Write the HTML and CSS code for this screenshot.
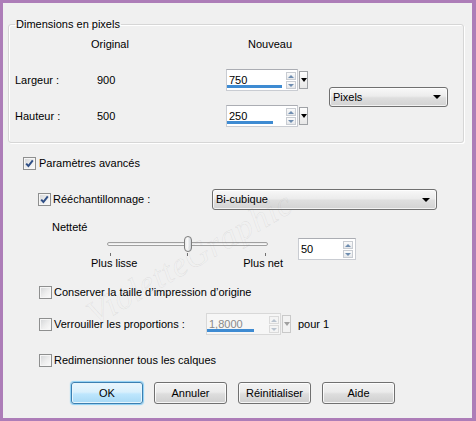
FILE: index.html
```html
<!DOCTYPE html>
<html lang="fr">
<head>
<meta charset="utf-8">
<title>Redimensionner</title>
<link rel="stylesheet" href="styles.css">
</head>
<body>
<div class="window">
  <div class="content">
    <fieldset class="group">
      <legend>Dimensions en pixels</legend>
      <div class="dim-grid">
        <span class="hdr-orig">Original</span>
        <span class="hdr-new">Nouveau</span>

        <span class="lbl r2">Largeur :</span>
        <span class="num r2">900</span>
        <div class="spin r2">
          <div class="field">
            <span class="val">750</span>
            <span class="updown"><span class="up"></span><span class="down"></span></span>
            <span class="bar" style="width:55px"></span>
          </div>
          <span class="drop"></span>
        </div>
        <div class="select pixels"><span>Pixels</span><span class="tri"></span></div>

        <span class="lbl r3">Hauteur :</span>
        <span class="num r3">500</span>
        <div class="spin r3">
          <div class="field">
            <span class="val">250</span>
            <span class="updown"><span class="up"></span><span class="down"></span></span>
            <span class="bar" style="width:46px"></span>
          </div>
          <span class="drop"></span>
        </div>
      </div>
    </fieldset>

    <div class="row row-adv">
      <span class="cb checked"><svg viewBox="0 0 11 11" width="11" height="11"><path d="M2.2 5.6 L4.4 8 L8.8 2.4" fill="none" stroke="#2f4f86" stroke-width="2"/></svg></span>
      <span class="txt">Paramètres avancés</span>
    </div>

    <div class="row row-resample">
      <div class="cblabel w-resample">
        <span class="cb checked"><svg viewBox="0 0 11 11" width="11" height="11"><path d="M2.2 5.6 L4.4 8 L8.8 2.4" fill="none" stroke="#2f4f86" stroke-width="2"/></svg></span>
        <span class="txt">Rééchantillonnage :</span>
      </div>
      <div class="select bicubic"><span>Bi-cubique</span><span class="tri"></span></div>
    </div>

    <div class="row row-net">Netteté</div>

    <div class="row row-slider">
      <div class="slider-col">
        <div class="slider">
          <span class="track"></span>
          <span class="tick t1"></span>
          <span class="tick t2"></span>
          <span class="tick t3"></span>
          <span class="thumb"></span>
        </div>
        <div class="slider-labels"><span>Plus lisse</span><span>Plus net</span></div>
      </div>
      <div class="field small">
        <span class="val">50</span>
        <span class="updown"><span class="up"></span><span class="down"></span></span>
      </div>
    </div>

    <div class="row row-keep">
      <span class="cb"></span>
      <span class="txt">Conserver la taille d’impression d’origine</span>
    </div>

    <div class="row row-lock">
      <div class="cblabel w-lock">
        <span class="cb"></span>
        <span class="txt">Verrouiller les proportions :</span>
      </div>
      <div class="spin disabled">
        <div class="field wide">
          <span class="val">1,8000</span>
          <span class="updown"><span class="up"></span><span class="down"></span></span>
          <span class="bar" style="width:47px"></span>
        </div>
        <span class="drop"></span>
      </div>
      <span class="pour">pour 1</span>
    </div>

    <div class="row row-all">
      <span class="cb"></span>
      <span class="txt">Redimensionner tous les calques</span>
    </div>

    <div class="row buttons">
      <button class="btn default">OK</button>
      <button class="btn">Annuler</button>
      <button class="btn">Réinitialiser</button>
      <button class="btn">Aide</button>
    </div>
  </div>
  <span class="watermark">VioletteGraphic</span>
</div>
</body>
</html>
```

FILE: styles.css
```css
* { box-sizing: border-box; }

html, body { margin: 0; padding: 0; }

body {
  font-family: "Liberation Sans", Arial, sans-serif;
  font-size: 11px;
  color: #000;
  background: #f0f0f0;
}

.window {
  width: 476px;
  height: 421px;
  border-style: solid;
  border-color: #ad7db8;
  border-width: 3px 4px 3px 3px;
  background: #f0f0f0;
  position: relative;
  overflow: hidden;
}

.content {
  display: flex;
  flex-direction: column;
}

/* ---------- group box ---------- */
.group {
  margin: 15px 8px 0 5px;
  padding: 2px 0 15px 6px;
  border: 1px solid #d6d6d6;
  border-radius: 3px;
  box-shadow: inset 1px 1px 0 #fff, 1px 1px 0 #fff;
  min-width: 0;
}

.group legend {
  padding: 0 1px;
  line-height: 13px;
}

.dim-grid {
  display: grid;
  grid-template-columns: 76px 135px 103px 119px;
  grid-template-rows: 22px 22px 22px;
  row-gap: 14px;
  align-items: center;
  line-height: 13px;
}

.hdr-orig { grid-column: 2; grid-row: 1; }
.hdr-new { grid-column: 3; grid-row: 1; padding-left: 22px; }
.lbl { grid-column: 1; }
.num { grid-column: 2; padding-left: 6px; }
.dim-grid .spin { grid-column: 3; }
.r2 { grid-row: 2; }
.r3 { grid-row: 3; }

.pixels {
  grid-column: 4;
  grid-row: 2 / 4;
  align-self: center;
  width: 119px;
  margin-top: -2px;
}

/* ---------- spin field ---------- */
.spin {
  display: flex;
  align-items: center;
  gap: 1px;
}

.field {
  position: relative;
  width: 72px;
  height: 22px;
  display: flex;
  align-items: center;
  background: #fff;
  border: 1px solid #c9ccd2;
  border-top-color: #abadb3;
  padding-left: 2px;
  padding-right: 1px;
  line-height: 13px;
}

.field.wide { width: 75px; }
.field.small { width: 58px; margin-left: 15px; margin-top: 3px; padding-right: 2px; }

.field .val { flex: 1; padding-top: 1px; }

.updown {
  display: flex;
  flex-direction: column;
  width: 10px;
  height: 17px;
  gap: 1px;
}

.updown .up,
.updown .down {
  flex: 1;
  position: relative;
  border: 1px solid #c8ccd2;
  background: linear-gradient(#fbfbfb, #e6e8eb);
}

.updown .up::after,
.updown .down::after {
  content: "";
  position: absolute;
  left: 1px;
  top: 2px;
  border-left: 3px solid transparent;
  border-right: 3px solid transparent;
}

.updown .up::after { border-bottom: 3px solid #6f8db0; }
.updown .down::after { border-top: 3px solid #6f8db0; top: 2px; }

.bar {
  position: absolute;
  left: 0;
  bottom: 2px;
  height: 3px;
  background: #3e8bd2;
}

.drop {
  position: relative;
  width: 9px;
  height: 18px;
  border: 1px solid #9fa2a6;
  background: linear-gradient(#fdfdfd, #e7e7e7);
}

.drop::after {
  content: "";
  position: absolute;
  left: 1px;
  top: 6px;
  border-left: 3px solid transparent;
  border-right: 3px solid transparent;
  border-top: 4px solid #000;
}

.disabled .field { background: #f6f6f6; border-color: #d8d8d8; color: #8a8a8a; }
.disabled .updown .up, .disabled .updown .down { border-color: #dadada; background: #f4f4f4; }
.disabled .updown .up::after { border-bottom-color: #b9c3cf; }
.disabled .updown .down::after { border-top-color: #b9c3cf; }
.disabled .drop { border-color: #c9c9c9; background: #f2f2f2; }
.disabled .drop::after { border-top-color: #a0a0a0; }

/* ---------- combo boxes ---------- */
.select {
  height: 20px;
  display: flex;
  align-items: center;
  justify-content: space-between;
  padding: 0 6px 0 3px;
  border: 1px solid #707070;
  border-radius: 3px;
  background: linear-gradient(#f8f8f8 0%, #ececec 45%, #dedede 55%, #d2d2d2 100%);
  box-shadow: inset 0 0 0 1px rgba(255,255,255,0.7);
  line-height: 13px;
}

.select .tri {
  width: 0;
  height: 0;
  border-left: 4px solid transparent;
  border-right: 4px solid transparent;
  border-top: 4px solid #000;
}

.bicubic { width: 225px; height: 21px; }

/* ---------- checkbox rows ---------- */
.row {
  display: flex;
  align-items: center;
  line-height: 13px;
}

.cblabel { display: flex; align-items: center; }

.cb {
  flex: none;
  width: 13px;
  height: 13px;
  border: 1px solid #8e8f8f;
  background: linear-gradient(135deg, #d2d4d6 0%, #eeeeee 55%, #fbfbfb 100%);
  box-shadow: inset 0 0 0 1px #f6f6f6;
  display: flex;
  align-items: center;
  justify-content: center;
}

.cb + .txt { margin-left: 3px; }

.row-adv { margin-top: 14px; padding-left: 20px; }
.row-resample { margin-top: 19px; padding-left: 35px; }
.w-resample { width: 174px; }
.w-resample .txt { margin-left: 2px; }
.row-net { margin-top: 11px; padding-left: 49px; }

/* ---------- slider ---------- */
.row-slider {
  margin-top: 1px;
  padding-left: 88px;
  align-items: flex-start;
}

.slider-col { width: 192px; }

.slider {
  position: relative;
  height: 22px;
}

.track {
  position: absolute;
  left: 16px;
  right: 15px;
  top: 7px;
  height: 4px;
  border: 1px solid #a0a0a0;
  border-radius: 2px;
  background: linear-gradient(#e6e6e6, #fdfdfd);
}

.tick {
  position: absolute;
  top: 18px;
  width: 1px;
  height: 3px;
  background: #707070;
}
.t1 { left: 19px; }
.t2 { left: 96px; }
.t3 { left: 174px; }

.thumb {
  position: absolute;
  left: 93px;
  top: 1px;
  width: 8px;
  height: 16px;
  border: 1px solid #7c7c7c;
  border-radius: 4px;
  background: linear-gradient(90deg, #e9e9e9, #fafafa 40%, #cfd3d8);
}

.slider-labels {
  display: flex;
  justify-content: space-between;
  line-height: 13px;
}

.row-keep { margin-top: 16px; padding-left: 36px; }
.row-keep .txt, .row-all .txt { margin-left: 2px; }

.row-lock { margin-top: 14px; padding-left: 36px; }
.w-lock { width: 167px; }
.w-lock .txt { margin-left: 2px; }
.pour { margin-left: 7px; }

.row-all { margin-top: 19px; padding-left: 36px; }

/* ---------- buttons ---------- */
.buttons {
  margin-top: 15px;
  padding-left: 68px;
  gap: 11px;
}

.btn {
  width: 73px;
  height: 22px;
  padding: 0;
  font: inherit;
  color: #000;
  border: 1px solid #707070;
  border-radius: 3px;
  background: linear-gradient(#f2f2f2 0%, #ebebeb 45%, #dddddd 55%, #cfcfcf 100%);
  box-shadow: inset 0 0 0 1px rgba(255,255,255,0.8);
}

.btn.default {
  width: 72px;
  border-color: #3c7fb1;
  background: linear-gradient(#eaf6fd 0%, #d9f0fc 45%, #bee6fd 55%, #a7d9f5 100%);
  box-shadow: inset 0 0 0 1px #e6f5fc, 0 0 1px 1px #8cd0f5;
}

/* ---------- watermark ---------- */
.watermark {
  position: absolute;
  left: 96px;
  top: 292px;
  font-family: "Liberation Serif", serif;
  font-style: italic;
  font-size: 34px;
  letter-spacing: 1px;
  color: rgba(0, 0, 0, 0.02);
  -webkit-text-stroke: 0.5px rgba(130, 130, 130, 0.16);
  transform: rotate(-30deg);
  transform-origin: left bottom;
  pointer-events: none;
}
```
